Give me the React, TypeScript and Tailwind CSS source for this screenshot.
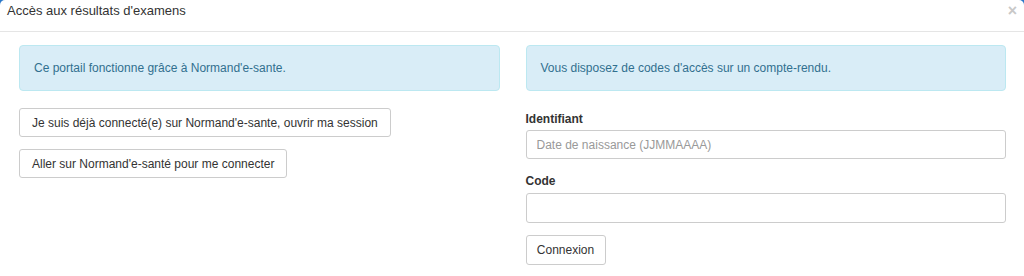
export default function App() {
  return (
    <div className="bg-[#2b78c9] w-[1024px] h-[276px] overflow-hidden" style={{ fontFamily: '"Liberation Sans", Arial, sans-serif' }}>
      <div className="bg-white rounded-t-[5px] h-full text-[12px] text-[#333]">
        {/* Header */}
        <div className="flex items-start justify-between h-[32px] pt-[2px] pl-[7px] pr-[7px] border-b border-[#e5e5e5]">
          <h4 className="text-[13px] leading-[18px] text-[#333]">Accès aux résultats d'examens</h4>
          <span className="text-[16px] font-bold text-[#c8c8c8] leading-[18px]">×</span>
        </div>

        {/* Body */}
        <div className="grid grid-cols-2 gap-[26px] px-[19px] pt-[13px] pr-[18px]">
          <div>
            <div className="h-[46px] flex items-center pl-[14px] bg-[#d9edf7] border border-[#bce8f1] rounded-[4px] text-[#31708f]">
              Ce portail fonctionne grâce à Normand'e-sante.
            </div>
            <div className="flex flex-col items-start gap-[12px] mt-[17px]">
              <button className="h-[29px] px-[12px] border border-[#ccc] rounded-[3px] bg-white text-[#333]">
                Je suis déjà connecté(e) sur Normand'e-sante, ouvrir ma session
              </button>
              <button className="h-[29px] px-[12px] border border-[#ccc] rounded-[3px] bg-white text-[#333]">
                Aller sur Normand'e-santé pour me connecter
              </button>
            </div>
          </div>

          <div>
            <div className="h-[46px] flex items-center pl-[14px] bg-[#d9edf7] border border-[#bce8f1] rounded-[4px] text-[#31708f]">
              Vous disposez de codes d'accès sur un compte-rendu.
            </div>
            <label className="block font-bold leading-[16px] mt-[20px] mb-[3px]">Identifiant</label>
            <input
              className="block w-full h-[29px] px-[10px] border border-[#ccc] rounded-[3px] text-[12px] placeholder:text-[#999] outline-none"
              placeholder="Date de naissance (JJMMAAAA)"
            />
            <label className="block font-bold leading-[16px] mt-[14px] mb-[4px]">Code</label>
            <input className="block w-full h-[30px] px-[10px] border border-[#ccc] rounded-[3px] text-[12px] outline-none" />
            <button className="mt-[12px] h-[30px] w-[80px] border border-[#ccc] rounded-[3px] bg-white text-[#333]">
              Connexion
            </button>
          </div>
        </div>
      </div>
    </div>
  )
}
